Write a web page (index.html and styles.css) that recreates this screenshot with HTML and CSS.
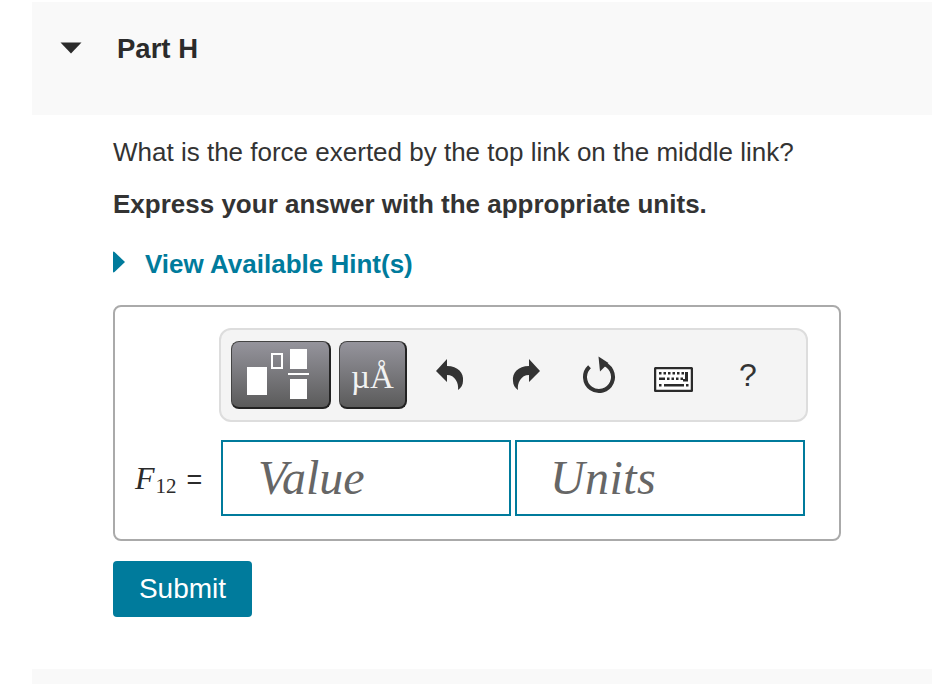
FILE: index.html
```html
<!DOCTYPE html>
<html lang="en">
<head>
    <meta charset="UTF-8">
    <title>Part H</title>
    <link rel="stylesheet" href="styles.css">
</head>
<body>
    <!-- Part header -->
    <div class="part-header">
        <svg class="part-arrow" width="22" height="12" viewBox="0 0 22 12"><path d="M0.5 0.5H21.5L11 11.5Z" fill="#2b2b2b"/></svg>
        <h2 class="part-title">Part H</h2>
    </div>

    <div class="part-body">
        <p class="question">What is the force exerted by the top link on the middle link?</p>
        <p class="instruction">Express your answer with the appropriate units.</p>

        <a class="hint-link" href="#">
            <svg class="hint-arrow" width="12" height="22" viewBox="0 0 12 22"><path d="M0 1.500 Q0 0 1.500 1 L12 11 L1.500 21 Q0 22 0 20.500Z" fill="#007b9c"/></svg>
            View Available Hint(s)
        </a>

        <div class="answer-box">
            <div class="toolbar">
                <button class="tool-btn tool-btn-wide" type="button">
                    <svg width="100" height="68" viewBox="0 0 100 68">
                        <rect x="16" y="26" width="20" height="28" fill="#fff"/>
                        <rect x="41" y="13" width="10" height="14" fill="none" stroke="#fff" stroke-width="2"/>
                        <rect x="59" y="8" width="17" height="20" fill="#fff"/>
                        <rect x="57" y="32" width="21" height="2" fill="#fff"/>
                        <rect x="59" y="38" width="17" height="20" fill="#fff"/>
                    </svg>
                </button>
                <button class="tool-btn tool-btn-units" type="button">µÅ</button>

                <svg class="tool-icon undo-icon" width="28" height="32" viewBox="0 0 28 32"><path d="M0 12 L11 0 V7 C22 7 28 14 27 22 C27 26 25 29 22 31 C23 24 19 16 11 16 V23Z" fill="#333"/></svg>
                <svg class="tool-icon redo-icon" width="28" height="32" viewBox="0 0 28 32"><path transform="translate(28 0) scale(-1 1)" d="M0 12 L11 0 V7 C22 7 28 14 27 22 C27 26 25 29 22 31 C23 24 19 16 11 16 V23Z" fill="#333"/></svg>
                <svg class="tool-icon reset-icon" width="34" height="38" viewBox="0 0 34 38">
                    <path d="M20 7.300 A14 14 0 1 1 7.500 10.700" fill="none" stroke="#333" stroke-width="4"/>
                    <path d="M16.500 0.500 L26.500 7 L18 15.500Z" fill="#333"/>
                </svg>
                <svg class="tool-icon keyboard-icon" width="39" height="25" viewBox="0 0 39 25">
                    <rect x="1" y="1" width="37" height="23" rx="1.500" fill="#fff" stroke="#2b2b2b" stroke-width="2.500"/>
                    <path d="M5 5h2.500v2.500h-2.500zM9.500 5h2.500v2.500h-2.500zM14 5h2.500v2.500h-2.500zM18.500 5h2.500v2.500h-2.500zM23 5h2.500v2.500h-2.500zM27.500 5h2.500v2.500h-2.500zM5 10.500h6v2.500h-6zM13 10.500h2.500v2.500h-2.500zM17.500 10.500h2.500v2.500h-2.500zM22 10.500h2.500v2.500h-2.500zM26.500 10.500h2.500v2.500h-2.500zM31 5h3v9.500h-5v-2.500h2zM5 17h2.500v2.500h-2.500zM10 17h20v2.500h-20zM32 17h2.500v2.500h-2.500z" fill="#2b2b2b"/>
                </svg>
                <span class="help-icon">?</span>
            </div>

            <div class="answer-row">
                <span class="math-label"><i>F</i><span class="math-sub">12</span><span class="math-eq">=</span></span>
                <div class="answer-input">Value</div>
                <div class="answer-input answer-units">Units</div>
            </div>
        </div>

        <button class="btn-submit" type="button">Submit</button>
    </div>

    <!-- Next part starts here -->
    <div class="next-part"></div>
</body>
</html>
```

FILE: styles.css
```css
html, body {
    margin: 0;
    height: 684px;
    overflow: hidden;
}

body {
    font-family: "Liberation Sans", Arial, sans-serif;
    background-color: #fff;
    color: #333;
    padding-top: 2px;
    box-sizing: border-box;
}

.part-header {
    display: flex;
    align-items: flex-start;
    height: 113px;
    margin-left: 32px;
    background-color: #f9f9f9;
}

.part-arrow {
    margin: 40px 0 0 28px;
}

.part-title {
    margin: 30px 0 0 35px;
    font-size: 27.500px;
    line-height: 34px;
    font-weight: bold;
    color: #2b2b2b;
}

.part-body {
    margin-left: 113px;
    width: 728px;
}

.question {
    margin: 21px 0 0 0;
    font-size: 26px;
    line-height: 32px;
    white-space: nowrap;
}

.instruction {
    margin: 20px 0 0 0;
    font-size: 26px;
    line-height: 32px;
    font-weight: bold;
    white-space: nowrap;
}

.hint-link {
    display: flex;
    align-items: center;
    margin-top: 28px;
    font-size: 26px;
    line-height: 32px;
    font-weight: bold;
    color: #007b9c;
    text-decoration: none;
}

.hint-arrow {
    margin: -5px 20px 0 0;
}

.answer-box {
    box-sizing: border-box;
    width: 728px;
    height: 236px;
    margin-top: 25px;
    padding: 21px 0 0 20px;
    background-color: #fff;
    border: 2px solid #aaa;
    border-radius: 8px;
}

.toolbar {
    display: flex;
    align-items: center;
    box-sizing: border-box;
    width: 589px;
    height: 94px;
    margin-left: 84px;
    padding-left: 10px;
    background-color: #f4f4f4;
    border: 2px solid #ddd;
    border-radius: 12px;
}

.tool-btn {
    box-sizing: border-box;
    height: 68px;
    padding: 0;
    background: linear-gradient(#95949c, #5b5b5b);
    border: 1px solid #444;
    border-bottom: 2px solid #222;
    border-right: 2px solid #222;
    border-radius: 8px;
    color: #f2f2f2;
}

.tool-btn-wide {
    width: 100px;
    margin-right: 8px;
}

.tool-btn-wide svg {
    display: block;
    margin: -1px;
}

.tool-btn-units {
    width: 68px;
    font-family: "Liberation Serif", serif;
    font-size: 33px;
    line-height: 40px;
    padding-top: 5px;
}

.tool-icon {
    flex: none;
}

.undo-icon {
    margin-left: 29px;
}

.redo-icon {
    margin-left: 48px;
}

.reset-icon {
    margin-left: 42px;
}

.keyboard-icon {
    margin: 9px 0 0 38px;
}

.help-icon {
    margin-left: 46px;
    font-size: 32px;
    line-height: 38px;
    color: #333;
}

.answer-row {
    display: flex;
    align-items: center;
    margin-top: 18px;
}

.math-label {
    width: 86px;
    flex: none;
    font-family: "Liberation Serif", serif;
    font-size: 32px;
    color: #2b2b2b;
    white-space: nowrap;
}

.math-sub {
    font-size: 21px;
    position: relative;
    top: 4px;
    margin-left: 1px;
}

.math-eq {
    font-family: "Liberation Sans", sans-serif;
    font-size: 27px;
    margin-left: 10px;
}

.answer-input {
    box-sizing: border-box;
    width: 290px;
    height: 76px;
    margin-right: 4px;
    padding-left: 35px;
    background-color: #fff;
    border: 2px solid #007b9c;
    font-family: "Liberation Serif", serif;
    font-style: italic;
    font-size: 48px;
    line-height: 72px;
    color: #666;
}

.answer-units {
    padding-left: 33px;
    letter-spacing: 0.400px;
}

.btn-submit {
    display: block;
    width: 139px;
    height: 56px;
    margin-top: 20px;
    padding: 0;
    font-family: "Liberation Sans", Arial, sans-serif;
    font-size: 28px;
    color: #fff;
    background-color: #007b9c;
    border: none;
    border-radius: 4px;
}

.next-part {
    height: 15px;
    margin-top: 52px;
    margin-left: 32px;
    background-color: #f9f9f9;
}
```
